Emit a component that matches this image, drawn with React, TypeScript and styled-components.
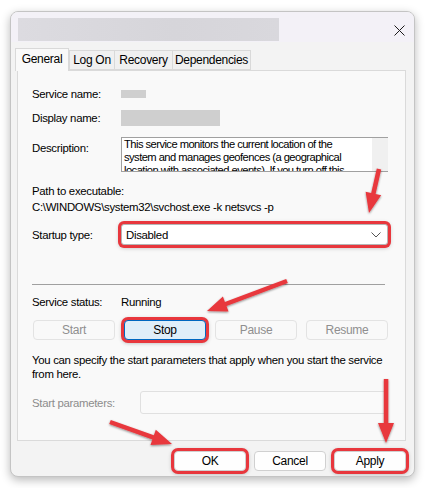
import React from "react";
import styled, { createGlobalStyle } from "styled-components";

const Global = createGlobalStyle`
  html, body { margin: 0; padding: 0; background: #ffffff; }
  body { font-family: "Liberation Sans", Arial, sans-serif; font-size: 11.4px; letter-spacing: -0.3px; color: #000; }
  * { box-sizing: border-box; }
`;

const Stage = styled.div`
  position: relative;
  width: 426px;
  height: 488px;
  padding: 11px 0 0 10px;
  overflow: hidden;
`;

const Window = styled.div`
  width: 405px;
  height: 466px;
  border-radius: 8px;
  border: 1px solid #c4c4c4;
  background: #f3f3f3;
  box-shadow: 0 3px 10px rgba(0, 0, 0, 0.28);
  display: flex;
  flex-direction: column;
  overflow: hidden;
`;

const TitleBar = styled.div`
  height: 30px;
  flex: none;
  background: #f3f1f7;
  display: flex;
  align-items: flex-start;
  justify-content: space-between;
  padding: 6px 0 0 7px;
`;

const BlurredTitle = styled.div`
  width: 261px;
  height: 23px;
  background: linear-gradient(90deg, #dcdbe0 0%, #d6d5da 60%, #d9d8dd 100%);
  filter: blur(0.6px);
`;

const CloseBtn = styled.div`
  width: 30px;
  height: 20px;
  display: flex;
  align-items: center;
  justify-content: center;
  margin: 2px 0 0 0;
`;

const Body = styled.div`
  flex: 1;
  display: flex;
  flex-direction: column;
  padding: 6px 8px 0 6px;
`;

const TabList = styled.div`
  display: flex;
  align-items: flex-end;
  height: 22px;
  position: relative;
  z-index: 1;
`;

const Tab = styled.div<{ $active?: boolean; $w: number }>`
  width: ${(p) => p.$w}px;
  height: ${(p) => (p.$active ? 23 : 20)}px;
  margin-bottom: ${(p) => (p.$active ? -1 : 0)}px;
  margin-left: ${(p) => (p.$active ? -2 : 0)}px;
  background: ${(p) => (p.$active ? "#f9f9f9" : "#f0f0f0")};
  border: 1px solid #d9d9d9;
  border-bottom: ${(p) => (p.$active ? "none" : "1px solid #d9d9d9")};
  border-right: ${(p) => (p.$active ? "1px solid #d9d9d9" : "none")};
  display: flex;
  align-items: ${(p) => (p.$active ? "flex-start" : "center")};
  justify-content: center;
  padding-top: ${(p) => (p.$active ? 3 : 0)}px;
  font-size: 12px;
  color: #000;
  white-space: nowrap;
  &:last-child { border-right: 1px solid #d9d9d9; }
`;

const Panel = styled.div`
  height: 371px;
  background: #f9f9f9;
  border: 1px solid #dadada;
  padding: 15px 16px 0 14px;
  display: flex;
  flex-direction: column;
`;

const Row = styled.div<{ $mt?: number; $h?: number }>`
  display: flex;
  align-items: center;
  margin-top: ${(p) => p.$mt ?? 0}px;
  height: ${(p) => p.$h ?? 16}px;
`;

const Label = styled.div<{ $w?: number; $disabled?: boolean }>`
  width: ${(p) => p.$w ?? 89}px;
  flex: none;
  color: ${(p) => (p.$disabled ? "#8c8c8c" : "#000")};
  white-space: nowrap;
`;

const Blur = styled.div<{ $w: number; $h: number }>`
  width: ${(p) => p.$w}px;
  height: ${(p) => p.$h}px;
  background: #cfcfcf;
  filter: blur(0.4px);
`;

const DescRow = styled.div`
  display: flex;
  align-items: flex-start;
  margin-top: 11px;
  height: 35px;
`;

const DescLabel = styled(Label)`
  padding-top: 5px;
`;

const DescBox = styled.div`
  width: 267px;
  height: 35px;
  border: 1px solid #a0a0a0;
  border-right: none;
  background: #ffffff;
  display: flex;
  overflow: hidden;
`;

const DescText = styled.div`
  flex: 1;
  padding: 0 0 0 2px;
  line-height: 13px;
  font-size: 11.2px;
  letter-spacing: -0.55px;
  color: #000;
  white-space: nowrap;
  overflow: hidden;
`;

const ScrollTrack = styled.div`
  width: 16px;
  flex: none;
  background: #f0f0f0;
  margin-top: -1px;
`;

const PlainLine = styled.div<{ $mt?: number }>`
  margin-top: ${(p) => p.$mt ?? 0}px;
  height: 16px;
  line-height: 16px;
  white-space: nowrap;
`;

const Combo = styled.div`
  width: 267px;
  height: 21px;
  background: #ffffff;
  border: 1px solid #b5b5b5;
  border-radius: 3px;
  display: flex;
  align-items: center;
  justify-content: space-between;
  padding: 0 6px 0 4px;
  box-shadow: 0 0 0 3px #e8373d, 0 1px 4px 2px rgba(0, 0, 0, 0.25);
`;

const Separator = styled.div`
  margin-top: 39px;
  height: 1px;
  width: 353px;
  background: #a0a0a0;
`;

const ButtonRow = styled.div`
  margin-top: 10px;
  display: flex;
  justify-content: space-between;
  width: 355px;
  margin-left: 1px;
`;

const Btn = styled.div<{ $disabled?: boolean; $w?: number; $hl?: boolean; $primary?: boolean }>`
  width: ${(p) => p.$w ?? 82}px;
  height: 20px;
  border-radius: 4px;
  border: 1px solid ${(p) => (p.$disabled ? "#e3e3e3" : p.$primary ? "#0067c0" : "#d0d0d0")};
  background: ${(p) => (p.$disabled ? "#f9f9f9" : p.$primary ? "#e0eef9" : "#fefefe")};
  color: ${(p) => (p.$disabled ? "#8f8f8f" : "#000")};
  display: flex;
  align-items: center;
  justify-content: center;
  font-size: 12px;
  box-shadow: ${(p) =>
    p.$hl ? "0 0 0 3px #e8373d, 0 1px 4px 2px rgba(0,0,0,0.3)" : "none"};
`;

const Paragraph = styled.div`
  margin-top: 13px;
  line-height: 14px;
  white-space: nowrap;
`;

const ParamInput = styled.div`
  width: 248px;
  height: 23px;
  border: 1px solid #e0e0e0;
  border-radius: 3px;
  background: #fafafa;
`;

const Footer = styled.div`
  display: flex;
  justify-content: flex-end;
  gap: 8px;
  padding-top: 10px;
`;

const Overlay = styled.svg`
  position: absolute;
  left: 0;
  top: 0;
  pointer-events: none;
`;

type P = [number, number];

function arrowPoints(tail: P, tip: P, shaft: number, headLen: number, headW: number): string {
  const dx = tip[0] - tail[0];
  const dy = tip[1] - tail[1];
  const len = Math.hypot(dx, dy);
  const ux = dx / len;
  const uy = dy / len;
  const nx = -uy;
  const ny = ux;
  const bx = tip[0] - ux * headLen;
  const by = tip[1] - uy * headLen;
  const s = shaft / 2;
  const h = headW / 2;
  const pts: P[] = [
    [tail[0] + nx * s, tail[1] + ny * s],
    [bx + nx * s, by + ny * s],
    [bx + nx * h, by + ny * h],
    tip,
    [bx - nx * h, by - ny * h],
    [bx - nx * s, by - ny * s],
    [tail[0] - nx * s, tail[1] - ny * s],
  ];
  return pts.map((p) => `${p[0].toFixed(1)},${p[1].toFixed(1)}`).join(" ");
}

const arrows: { tail: P; tip: P }[] = [
  { tail: [379, 169], tip: [369, 213] },
  { tail: [287, 281], tip: [207, 311] },
  { tail: [110, 422], tip: [172, 444] },
  { tail: [386, 379], tip: [386, 443] },
];

export default function App() {
  return (
    <>
      <Global />
      <Stage>
        <Window>
          <TitleBar>
            <BlurredTitle />
            <CloseBtn>
              <svg width="11" height="11" viewBox="0 0 11 11">
                <path d="M0.5 0.5 L10.5 10.5 M10.5 0.5 L0.5 10.5" stroke="#1a1a1a" strokeWidth="1" />
              </svg>
            </CloseBtn>
          </TitleBar>
          <Body>
            <TabList>
              <Tab $active $w={54}>General</Tab>
              <Tab $w={45}>Log On</Tab>
              <Tab $w={58}>Recovery</Tab>
              <Tab $w={79}>Dependencies</Tab>
            </TabList>
            <Panel>
              <Row>
                <Label>Service name:</Label>
                <Blur $w={25} $h={8} />
              </Row>
              <Row $mt={8}>
                <Label>Display name:</Label>
                <Blur $w={99} $h={16} />
              </Row>
              <DescRow>
                <DescLabel>Description:</DescLabel>
                <DescBox>
                  <DescText>
                    This service monitors the current location of the
                    <br />
                    system and manages geofences (a geographical
                    <br />
                    location with associated events).  If you turn off this
                  </DescText>
                  <ScrollTrack />
                </DescBox>
              </DescRow>
              <PlainLine $mt={11}>Path to executable:</PlainLine>
              <PlainLine>C:\WINDOWS\system32\svchost.exe -k netsvcs -p</PlainLine>
              <Row $mt={9} $h={21}>
                <Label>Startup type:</Label>
                <Combo>
                  <span>Disabled</span>
                  <svg width="10" height="6" viewBox="0 0 10 6">
                    <path d="M0.5 0.5 L5 5 L9.5 0.5" fill="none" stroke="#555" strokeWidth="1" />
                  </svg>
                </Combo>
              </Row>
              <Separator />
              <Row $mt={9}>
                <Label>Service status:</Label>
                <span>Running</span>
              </Row>
              <ButtonRow>
                <Btn $disabled>Start</Btn>
                <Btn $primary $hl>Stop</Btn>
                <Btn $disabled>Pause</Btn>
                <Btn $disabled>Resume</Btn>
              </ButtonRow>
              <Paragraph>
                You can specify the start parameters that apply when you start the service
                <br />
                from here.
              </Paragraph>
              <Row $mt={10} $h={23}>
                <Label $w={108} $disabled>Start parameters:</Label>
                <ParamInput />
              </Row>
            </Panel>
            <Footer>
              <Btn $w={72} $hl>OK</Btn>
              <Btn $w={72}>Cancel</Btn>
              <Btn $w={72} $hl>Apply</Btn>
            </Footer>
          </Body>
        </Window>
        <Overlay width={426} height={488} viewBox="0 0 426 488">
          <defs>
            <filter id="sh" x="-20%" y="-20%" width="140%" height="140%">
              <feDropShadow dx="0" dy="1" stdDeviation="1.2" floodColor="#000" floodOpacity="0.45" />
            </filter>
          </defs>
          {arrows.map((a, i) => (
            <polygon
              key={i}
              points={arrowPoints(a.tail, a.tip, 4.5, 20, 16)}
              fill="#e8373d"
              filter="url(#sh)"
            />
          ))}
        </Overlay>
      </Stage>
    </>
  );
}
